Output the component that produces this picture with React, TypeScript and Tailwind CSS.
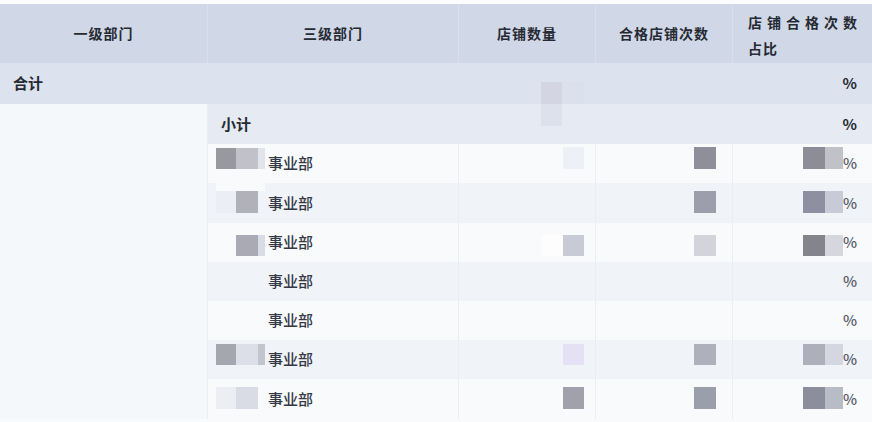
import React from "react";

type Block = [number, number, number, number, string];

// mosaic squares that hide the figures in the screenshot
const mosaic: Block[] = [
  [216, 148, 20, 21, "#98999f"],
  [236, 148, 22, 21, "#c0c1c9"],
  [258, 148, 7, 21, "#e2e4eb"],
  [216, 183, 49, 8, "#f8fafc"],
  [216, 191, 20, 22, "#eceef5"],
  [236, 191, 22, 22, "#b0b1b9"],
  [236, 235, 22, 21, "#a9aab3"],
  [258, 235, 7, 21, "#d9dce5"],
  [216, 344, 20, 21, "#a6a7ae"],
  [236, 344, 22, 21, "#dcdfe8"],
  [258, 344, 7, 21, "#c3c5ce"],
  [216, 387, 20, 22, "#eceef3"],
  [236, 387, 22, 22, "#d9dce5"],
  [541, 82, 21, 22, "#d3d6e2"],
  [541, 104, 21, 22, "#dde1eb"],
  [562, 82, 22, 22, "#dae0ec"],
  [563, 147, 21, 22, "#edf0f7"],
  [542, 235, 21, 21, "#fdfdfe"],
  [563, 235, 21, 21, "#c8cad5"],
  [563, 344, 21, 21, "#e3e1f3"],
  [563, 387, 21, 22, "#a0a1aa"],
  [694, 147, 22, 22, "#8e8f99"],
  [694, 191, 22, 22, "#9c9eac"],
  [694, 235, 22, 21, "#d2d3db"],
  [694, 344, 22, 21, "#aeb0bb"],
  [694, 387, 22, 22, "#9b9fab"],
  [803, 147, 22, 22, "#8c8d96"],
  [825, 147, 18, 22, "#c1c2c8"],
  [803, 191, 22, 22, "#8e8fa0"],
  [825, 191, 18, 22, "#c9cad8"],
  [803, 235, 22, 21, "#84848c"],
  [825, 235, 18, 21, "#d6d6de"],
  [803, 344, 22, 21, "#adafbb"],
  [825, 344, 18, 21, "#d5d6e0"],
  [803, 387, 22, 22, "#8c8e9e"],
  [825, 387, 18, 22, "#b8bcc6"],
];

const rows = [
  { bg: "bg-[#f8fafc]", h: "h-[39px]" },
  { bg: "bg-[#f0f3f8]", h: "h-[40px]" },
  { bg: "bg-[#f8fafc]", h: "h-[39px]" },
  { bg: "bg-[#f0f3f8]", h: "h-[39px]" },
  { bg: "bg-[#f8fafc]", h: "h-[39px]" },
  { bg: "bg-[#f0f3f8]", h: "h-[39px]" },
  { bg: "bg-[#f8fafc]", h: "h-[40px]" },
];

const headCell =
  "flex items-center justify-center border-r border-[#d9e0ec] text-[14px] font-bold tracking-[1px] text-[#262a33]";

const App: React.FC = () => {
  return (
    <div className="relative h-[422px] w-[872px] overflow-hidden bg-[#f8fafc] pt-1 font-['Noto_Sans_CJK_SC','Liberation_Sans',sans-serif]">
      <div className="absolute inset-x-0 top-0 h-1 bg-[#fbfcfd]" />

      {/* header */}
      <div className="grid h-[59px] grid-cols-[208px_251px_137px_137px_139px] bg-[#d0d8e8]">
        <div className={headCell}>一级部门</div>
        <div className={headCell}>三级部门</div>
        <div className={headCell}>店铺数量</div>
        <div className={headCell}>合格店铺次数</div>
        <div className="flex flex-col justify-center pl-[15px] pt-[3px] text-[14px] font-bold leading-[26px] text-[#262a33]">
          <span className="tracking-[5px]">店铺合格次数</span>
          <span className="tracking-[1px]">占比</span>
        </div>
      </div>

      {/* total */}
      <div className="flex h-[41px] items-center justify-between bg-[#dde3ee] pl-[13px] pr-[15px] text-[15px] font-bold text-[#262a33]">
        <span>合计</span>
        <span>%</span>
      </div>

      <div className="flex">
        {/* merged first-level department cell */}
        <div className="w-[208px] border-r border-[#eaeef3] bg-[#f5f8fa]" />

        <div className="flex-1">
          <div className="flex h-[40px] items-center justify-between bg-[#e5eaf3] pl-[13px] pr-[15px] text-[15px] font-bold text-[#262a33]">
            <span>小计</span>
            <span>%</span>
          </div>
          {rows.map((r, i) => (
            <div
              key={i}
              className={`grid grid-cols-[251px_137px_137px_139px] ${r.bg} ${r.h} text-[15px] font-medium text-[#343945]`}
            >
              <div className="flex items-center border-r border-[#eaeef3] pl-[60px]">
                事业部
              </div>
              <div className="border-r border-[#eaeef3]" />
              <div className="border-r border-[#eaeef3]" />
              <div className="flex items-center justify-end pr-[15px] text-[#595d69]">
                %
              </div>
            </div>
          ))}
        </div>
      </div>

      {/* mosaic over the censored figures */}
      <div className="pointer-events-none absolute inset-0">
        {mosaic.map(([x, y, w, h, c], i) => (
          <div
            key={i}
            className="absolute"
            style={{ left: x, top: y, width: w, height: h, background: c }}
          />
        ))}
      </div>
    </div>
  );
};

export default App;
